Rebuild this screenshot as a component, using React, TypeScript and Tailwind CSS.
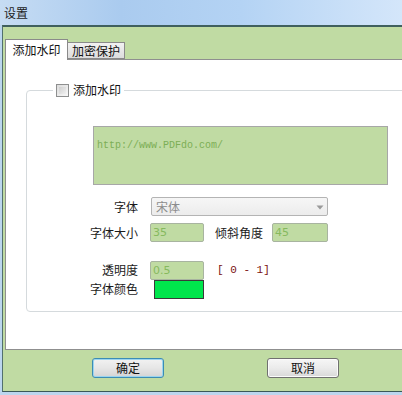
import React from "react";

const cjk = { fontFamily: '"Noto Sans CJK SC", "Noto Sans", sans-serif' };
const mono = { fontFamily: '"Liberation Mono", monospace' };

function Label({ children, w = "w-[111px]" }: { children: React.ReactNode; w?: string }) {
  return (
    <div className={`${w} text-right text-[12px] leading-[14px] text-[#1a1a1a] shrink-0`} style={cjk}>
      {children}
    </div>
  );
}

function GreenInput({ value, w }: { value: string; w: string }) {
  return (
    <div
      className={`${w} h-[19px] shrink-0 rounded-[2px] border border-[#a8b4a0] bg-[#c0dba3] pl-[2px] text-[11px] leading-[17px] text-[#86b95e]`}
      style={{ fontFamily: '"DejaVu Sans", sans-serif' }}
    >
      {value}
    </div>
  );
}

export default function App() {
  return (
    <div className="w-[402px] h-[395px] overflow-hidden flex flex-col bg-[#bcd6ee]" style={cjk}>
      {/* title bar */}
      <div className="h-[25px] shrink-0 bg-[linear-gradient(90deg,#c6dcf3_0%,#aacbef_30%,#b4d3f4_60%,#d4e6fa_100%)] flex items-center pl-[4px]">
        <span className="text-[12px] text-[#1c1c1c] leading-[14px]">设置</span>
      </div>
      <div className="flex-1 pl-[2px] flex flex-col">
        <div className="flex-1 flex flex-col border-t-2 border-l border-b border-t-[#40605e] border-l-[#52706e] border-b-[#3a5858] bg-[#c0dba3] pl-[2px]">
          {/* tabs */}
          <div className="mt-[12px] h-[20px] flex items-end relative z-10">
            <div className="h-[21px] w-[63px] bg-white border border-b-0 border-[#8a8a8a] flex items-center justify-center text-[12px] text-[#111] -mb-[1px]">
              添加水印
            </div>
            <div className="h-[17px] w-[57px] bg-[linear-gradient(#f2f2f2,#dcdcdc)] border border-l-0 border-[#8a8a8a] flex items-center justify-center text-[12px] text-[#111]">
              加密保护
            </div>
          </div>
          {/* panel */}
          <div className="h-[291px] w-[410px] bg-white border border-[#8f8f8f] pt-[23px] pl-[20px]">
            <fieldset className="w-[390px] h-[229px] rounded-[4px] border border-[#d5dadd] pl-0">
              <legend className="ml-[26px] px-[3px] flex items-center gap-[4px] text-[12px] leading-[14px] text-[#111]">
                <span className="w-[13px] h-[13px] border border-[#8e8f8f] bg-[linear-gradient(135deg,#dcdcdc,#f8f8f8)] inline-block p-[2px]">
                  <span className="block w-full h-full bg-[linear-gradient(135deg,#cfcfcf,#f0f0f0)]" />
                </span>
                添加水印
              </legend>
              <div className="mt-[29px] ml-[66px] w-[295px] h-[59px] border border-[#a7a7a7] bg-[#c0dba3] px-[3px] pt-[2px]">
                <span className="text-[10px] leading-[12px] text-[#7cae55]" style={mono}>
                  http://www.PDFdo.com/
                </span>
              </div>
              <div className="mt-[12px] flex items-center h-[19px]">
                <Label>字体</Label>
                <div className="ml-[13px] w-[177px] h-[19px] rounded-[2px] border border-[#b4b4b4] bg-[linear-gradient(#f6f6f6,#ececec)] flex items-center pl-[4px] relative">
                  <span className="text-[12px] text-[#8c8c8c] leading-[14px]">宋体</span>
                  <svg className="absolute right-[3px] top-[7px]" width="8" height="5" viewBox="0 0 8 5">
                    <path d="M0.5 0.5 L7.5 0.5 L4 4.5 Z" fill="#9a9a9a" />
                  </svg>
                </div>
              </div>
              <div className="mt-[7px] flex items-center h-[19px]">
                <Label>字体大小</Label>
                <div className="ml-[12px]">
                  <GreenInput value="35" w="w-[54px]" />
                </div>
                <div className="ml-[11px] text-[12px] leading-[14px] text-[#1a1a1a] w-[50px]">倾斜角度</div>
                <div className="ml-[7px]">
                  <GreenInput value="45" w="w-[56px]" />
                </div>
              </div>
              <div className="mt-[19px] flex items-center h-[18px]">
                <Label>透明度</Label>
                <div className="ml-[12px]">
                  <GreenInput value="0.5" w="w-[54px]" />
                </div>
                <div className="ml-[13px] text-[11px] leading-[14px] text-[#7a1010]" style={mono}>
                  [ 0 - 1]
                </div>
              </div>
              <div className="mt-[0px] flex items-center h-[20px]">
                <Label>字体颜色</Label>
                <div className="ml-[16px] w-[50px] h-[19px] border border-[#3a3a3a] bg-[#00e64c]" />
              </div>
            </fieldset>
          </div>
          {/* buttons */}
          <div className="mt-[8px] h-[20px] flex">
            <div className="ml-[87px] w-[72px] h-[20px] rounded-[3px] border border-[#3c8cb4] bg-[linear-gradient(#f2f2f2_0%,#e6e6e6_50%,#d4d4d4_100%)] shadow-[inset_0_0_0_1px_#9ad4ee] flex items-center justify-center text-[12px] text-[#111]">
              确定
            </div>
            <div className="ml-[103px] w-[72px] h-[20px] rounded-[3px] border border-[#707070] bg-[linear-gradient(#f6f6f6_0%,#ebebeb_50%,#d8d8d8_100%)] shadow-[inset_0_0_0_1px_#fbfbfb] flex items-center justify-center text-[12px] text-[#111]">
              取消
            </div>
          </div>
          <div className="flex-1" />
        </div>
        <div className="h-[3px]" />
      </div>
    </div>
  );
}
